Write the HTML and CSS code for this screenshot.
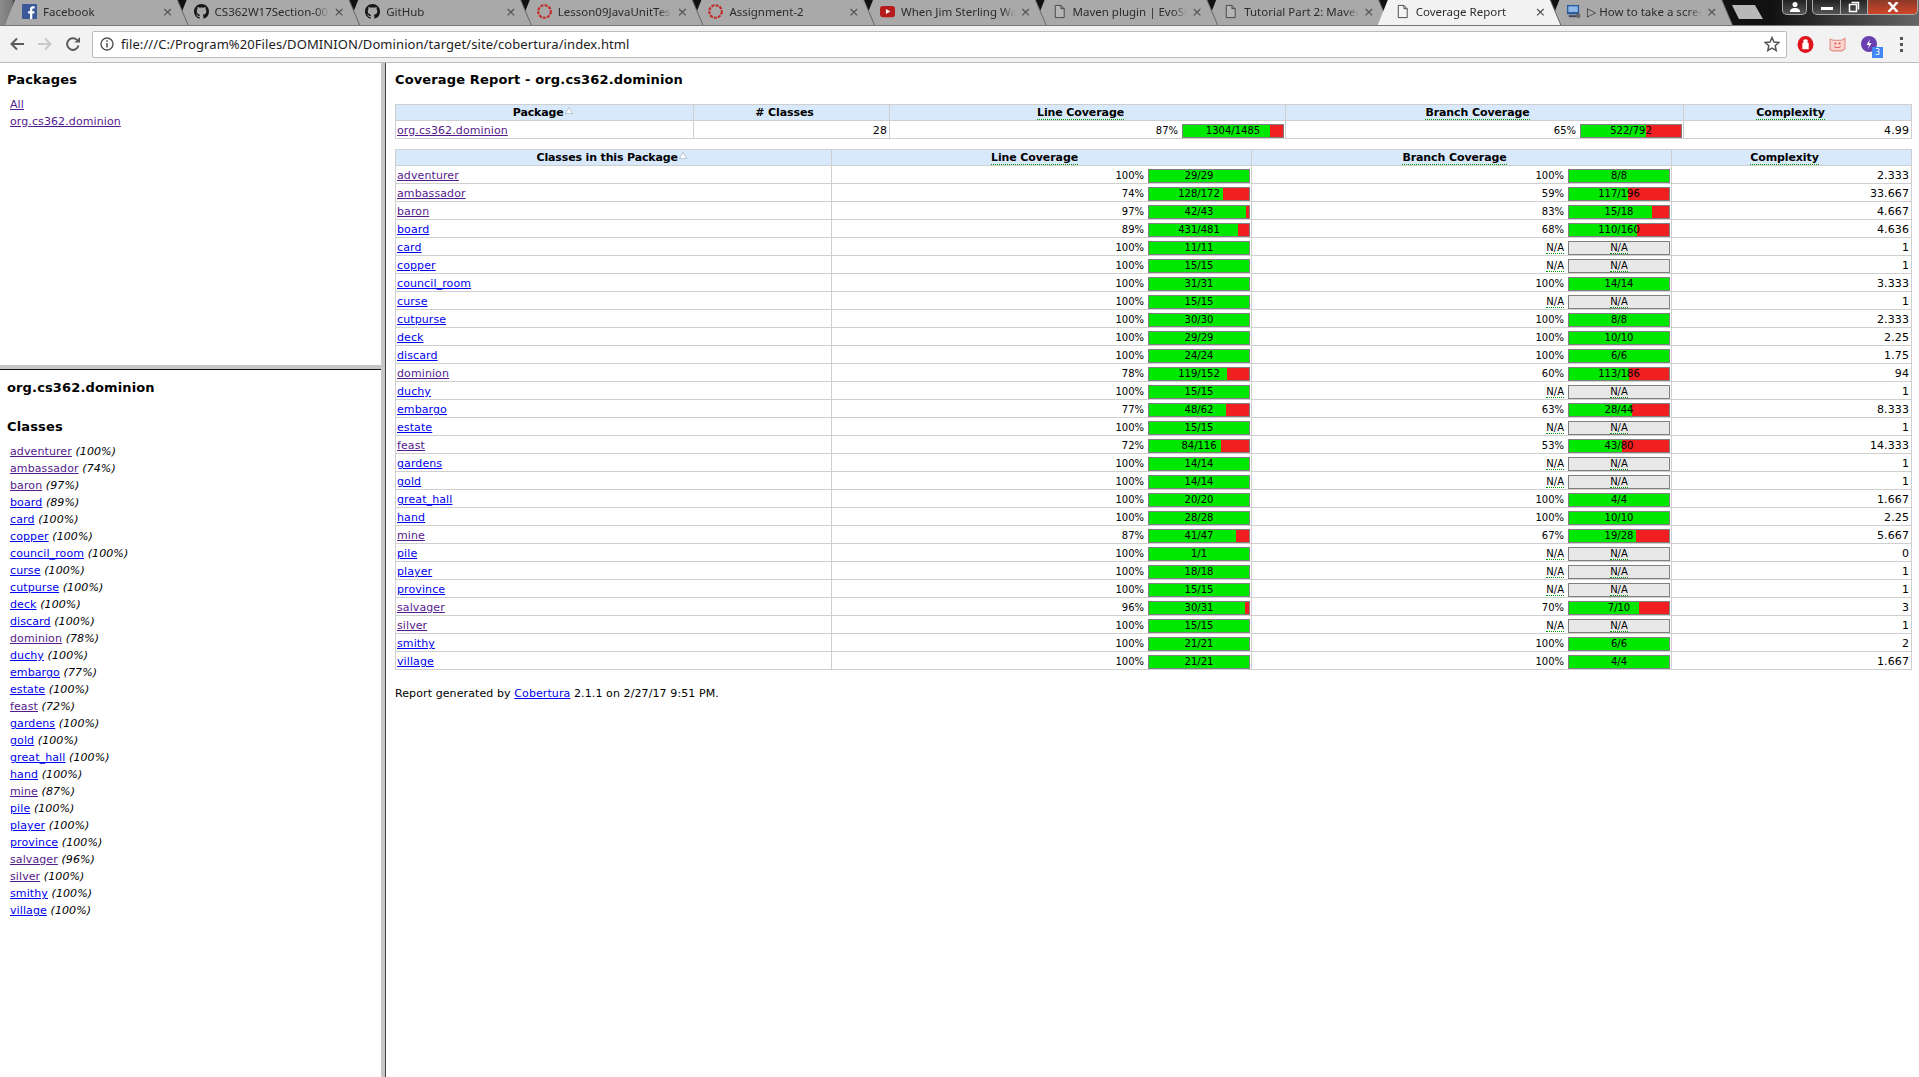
FILE: index.html
```html
<!DOCTYPE html>
<html lang="en">
<head>
    <meta charset="UTF-8">
    <title>Coverage Report</title>
    <link rel="stylesheet" href="styles.css">
</head>
<body>
    <svg class="defs" width="0" height="0">
        <symbol id="page" viewBox="0 0 16 16"><path d="M3.5 1.5h6l3.5 3.5v9.5h-9.5zM9.5 1.5v3.5h3.5" fill="#fff" fill-opacity="0.15" stroke="#444" stroke-width="1"/></symbol>
        <symbol id="github" viewBox="0 0 16 16"><path fill="#181717" d="M8 0C3.58 0 0 3.58 0 8c0 3.54 2.29 6.53 5.47 7.59.4.07.55-.17.55-.38 0-.19-.01-.82-.01-1.49-2.01.37-2.53-.49-2.69-.94-.09-.23-.48-.94-.82-1.13-.28-.15-.68-.52-.01-.53.63-.01 1.08.58 1.23.82.72 1.21 1.87.87 2.33.66.07-.52.28-.87.51-1.07-1.78-.2-3.64-.89-3.64-3.95 0-.87.31-1.59.82-2.15-.08-.2-.36-1.02.08-2.12 0 0 .67-.21 2.2.82.64-.18 1.32-.27 2-.27.68 0 1.36.09 2 .27 1.53-1.04 2.2-.82 2.2-.82.44 1.1.16 1.92.08 2.12.51.56.82 1.27.82 2.15 0 3.07-1.87 3.75-3.65 3.95.29.25.54.73.54 1.48 0 1.07-.01 1.93-.01 2.2 0 .21.15.46.55.38A8.013 8.013 0 0016 8c0-4.42-3.58-8-8-8z"/></symbol>
        <symbol id="ring" viewBox="0 0 16 16"><circle cx="8" cy="8" r="6.7" fill="none" stroke="#c42b27" stroke-width="2.3" stroke-dasharray="3.2 1.2"/></symbol>
        <symbol id="sort" viewBox="0 0 8 7"><path d="M4 .5L7.5 6.5H.5z" fill="#fff" stroke="#9fb2c6" stroke-width="0.7"/></symbol>
    </svg>

    <div class="tabstrip">
        <div class="tab"><div class="tab-shape">
            <svg class="favicon" viewBox="0 0 16 16"><rect width="16" height="16" rx="1" fill="#3b5998"/><path d="M11 16v-6h2l.4-2.4H11V6c0-.8.3-1.2 1.2-1.2h1.3V2.6c-.4 0-1-.1-1.8-.1-1.9 0-3.1 1.100-3.100 3.200v1.900H6.500V10h2.100v6z" fill="#fff"/></svg>
            <span class="tab-title">Facebook</span><span class="tab-close">×</span>
        </div></div>
        <div class="tab"><div class="tab-shape">
            <svg class="favicon"><use href="#github"/></svg>
            <span class="tab-title">CS362W17Section-00</span><span class="tab-close">×</span>
        </div></div>
        <div class="tab"><div class="tab-shape">
            <svg class="favicon"><use href="#github"/></svg>
            <span class="tab-title">GitHub</span><span class="tab-close">×</span>
        </div></div>
        <div class="tab"><div class="tab-shape">
            <svg class="favicon"><use href="#ring"/></svg>
            <span class="tab-title">Lesson09JavaUnitTesting</span><span class="tab-close">×</span>
        </div></div>
        <div class="tab"><div class="tab-shape">
            <svg class="favicon"><use href="#ring"/></svg>
            <span class="tab-title">Assignment-2</span><span class="tab-close">×</span>
        </div></div>
        <div class="tab"><div class="tab-shape">
            <svg class="favicon" viewBox="0 0 16 16"><rect y="2" width="16" height="12" rx="3" fill="#b71c1c"/><path d="M6.300 5.300L11 8l-4.700 2.700z" fill="#fff"/></svg>
            <span class="tab-title">When Jim Sterling Was</span><span class="tab-close">×</span>
        </div></div>
        <div class="tab"><div class="tab-shape">
            <svg class="favicon"><use href="#page"/></svg>
            <span class="tab-title">Maven plugin | EvoSuite</span><span class="tab-close">×</span>
        </div></div>
        <div class="tab"><div class="tab-shape">
            <svg class="favicon"><use href="#page"/></svg>
            <span class="tab-title">Tutorial Part 2: Maven</span><span class="tab-close">×</span>
        </div></div>
        <div class="tab tab-active"><div class="tab-shape">
            <svg class="favicon"><use href="#page"/></svg>
            <span class="tab-title">Coverage Report</span><span class="tab-close">×</span>
        </div></div>
        <div class="tab"><div class="tab-shape">
            <svg class="favicon" viewBox="0 0 16 16"><rect x="1" y="1" width="13" height="10" fill="#2c5c9e"/><rect x="2.500" y="2.500" width="10" height="6" fill="#8fb8e8"/><rect x="3" y="12" width="9" height="2" fill="#445"/><circle cx="13" cy="12.500" r="2.500" fill="#666"/></svg>
            <span class="tab-title">▷ How to take a screenshot</span><span class="tab-close">×</span>
        </div></div>
        <div class="newtab"></div>
        <div class="winbtns">
            <div class="winbtn btn-profile"><svg viewBox="0 0 12 12" width="12" height="12"><circle cx="6" cy="3.500" r="2.500" fill="#fff"/><path d="M1 11c0-3 2-4 5-4s5 1 5 4z" fill="#fff"/></svg></div>
            <div class="winbtn btn-min"><i></i></div>
            <div class="winbtn btn-max"><svg viewBox="0 0 12 12" width="12" height="12"><path d="M3.500 1.500h7v7M1.500 3.500h7v7h-7z" fill="none" stroke="#fff" stroke-width="1.500"/></svg></div>
            <div class="winbtn btn-close"><svg viewBox="0 0 12 10" width="12" height="10"><path d="M1.500 0l9 10M10.500 0l-9 10" stroke="#fff" stroke-width="2.500"/></svg></div>
        </div>
    </div>

    <div class="toolbar">
        <svg class="navicon" viewBox="0 0 16 16"><path d="M15 8H3M8 2.500L2.500 8 8 13.500" fill="none" stroke="#5a5a5a" stroke-width="2"/></svg>
        <svg class="navicon" viewBox="0 0 16 16"><path d="M1 8h12M8 2.500L13.500 8 8 13.500" fill="none" stroke="#c8c8c8" stroke-width="2"/></svg>
        <svg class="navicon" viewBox="0 0 16 16"><path d="M13.500 9.500A5.800 5.800 0 1 1 12 4" fill="none" stroke="#5a5a5a" stroke-width="2"/><path d="M9.500 6.500H15V1z" fill="#5a5a5a"/></svg>
        <div class="omnibox">
            <svg class="info" viewBox="0 0 14 14"><circle cx="7" cy="7" r="6" fill="none" stroke="#555" stroke-width="1.400"/><path d="M7 6v4.500M7 3.200v1.600" stroke="#555" stroke-width="1.600"/></svg>
            <span class="url">file:///C:/Program%20Files/DOMINION/Dominion/target/site/cobertura/index.html</span>
            <svg class="star" viewBox="0 0 16 16"><path d="M8 1.500l2 4.500 4.800.5-3.600 3.200 1 4.800L8 12.100l-4.200 2.400 1-4.800L1.200 6.500 6 6z" fill="none" stroke="#555" stroke-width="1.500"/></svg>
        </div>
        <div class="exts">
            <svg class="ext" viewBox="0 0 16 16"><ellipse cx="8" cy="8" rx="7.500" ry="8" fill="#e0141c"/><path d="M5 12.500V6.500h1V3.500h1.200V3h1.600v.5H10v3h1v6z" fill="#fff"/></svg>
            <svg class="ext" viewBox="0 0 16 16"><path d="M1 3l3 1h8l3-2v10l-3 2H4l-3-1z" fill="#fbd5d0" stroke="#e58a80"/><circle cx="6" cy="7" r="1" fill="#d9534f"/><circle cx="10" cy="7" r="1" fill="#d9534f"/><path d="M5 10q3 2 6 0" fill="none" stroke="#d9534f"/></svg>
            <div class="ext ext-badged">
                <svg viewBox="0 0 16 16"><circle cx="8" cy="8" r="8" fill="#6a3fb0"/><path d="M9 3L5.500 9H8l-1 4 3.500-6H8z" fill="#fff"/></svg>
                <span class="badge">3</span>
            </div>
            <div class="menu-dots"><i></i><i></i><i></i></div>
        </div>
    </div>

    <div class="frames">
        <div class="sidebar">
            <div class="pane-packages">
                <h2>Packages</h2>
                <ul class="navlist">
                    <li><a class="seen" href="#">All</a></li>
                    <li><a class="seen" href="#">org.cs362.dominion</a></li>
                </ul>
            </div>
            <div class="pane-classes">
                <h2>org.cs362.dominion</h2>
                <h2 class="classes-title">Classes</h2>
                <ul class="navlist">
                    <li><a class="seen" href="#">adventurer</a> <em>(100%)</em></li>
                    <li><a class="seen" href="#">ambassador</a> <em>(74%)</em></li>
                    <li><a class="seen" href="#">baron</a> <em>(97%)</em></li>
                    <li><a href="#">board</a> <em>(89%)</em></li>
                    <li><a href="#">card</a> <em>(100%)</em></li>
                    <li><a href="#">copper</a> <em>(100%)</em></li>
                    <li><a href="#">council_room</a> <em>(100%)</em></li>
                    <li><a href="#">curse</a> <em>(100%)</em></li>
                    <li><a href="#">cutpurse</a> <em>(100%)</em></li>
                    <li><a href="#">deck</a> <em>(100%)</em></li>
                    <li><a href="#">discard</a> <em>(100%)</em></li>
                    <li><a class="seen" href="#">dominion</a> <em>(78%)</em></li>
                    <li><a href="#">duchy</a> <em>(100%)</em></li>
                    <li><a href="#">embargo</a> <em>(77%)</em></li>
                    <li><a href="#">estate</a> <em>(100%)</em></li>
                    <li><a class="seen" href="#">feast</a> <em>(72%)</em></li>
                    <li><a href="#">gardens</a> <em>(100%)</em></li>
                    <li><a href="#">gold</a> <em>(100%)</em></li>
                    <li><a href="#">great_hall</a> <em>(100%)</em></li>
                    <li><a href="#">hand</a> <em>(100%)</em></li>
                    <li><a class="seen" href="#">mine</a> <em>(87%)</em></li>
                    <li><a href="#">pile</a> <em>(100%)</em></li>
                    <li><a href="#">player</a> <em>(100%)</em></li>
                    <li><a href="#">province</a> <em>(100%)</em></li>
                    <li><a class="seen" href="#">salvager</a> <em>(96%)</em></li>
                    <li><a class="seen" href="#">silver</a> <em>(100%)</em></li>
                    <li><a href="#">smithy</a> <em>(100%)</em></li>
                    <li><a href="#">village</a> <em>(100%)</em></li>
                </ul>
            </div>
        </div>

        <div class="report">
            <h1>Coverage Report - org.cs362.dominion</h1>

            <table class="report-table summary">
                <colgroup><col class="c-pkg"><col class="c-num"><col class="c-line"><col class="c-branch"><col></colgroup>
                <thead>
                    <tr>
                        <th class="sorted">Package <svg class="sort"><use href="#sort"/></svg></th>
                        <th># Classes</th>
                        <th><span class="abbr">Line Coverage</span></th>
                        <th><span class="abbr">Branch Coverage</span></th>
                        <th><span class="abbr">Complexity</span></th>
                    </tr>
                </thead>
                <tbody>
                    <tr>
                        <td><a class="seen" href="#">org.cs362.dominion</a></td>
                        <td class="num">28</td>
                        <td><div class="cov"><span>87%</span><div class="bar"><i style="width:87%"></i><b>1304/1485</b></div></div></td>
                        <td><div class="cov"><span>65%</span><div class="bar"><i style="width:65%"></i><b>522/792</b></div></div></td>
                        <td class="num">4.99</td>
                    </tr>
                </tbody>
            </table>

            <table class="report-table classes">
                <colgroup><col class="c-name"><col class="c-cov"><col class="c-cov"><col></colgroup>
                <thead>
                    <tr>
                        <th class="sorted">Classes in this Package <svg class="sort"><use href="#sort"/></svg></th>
                        <th><span class="abbr">Line Coverage</span></th>
                        <th><span class="abbr">Branch Coverage</span></th>
                        <th><span class="abbr">Complexity</span></th>
                    </tr>
                </thead>
                <tbody>
                    <tr><td><a class="seen" href="#">adventurer</a></td><td><div class="cov"><span>100%</span><div class="bar"><i style="width:100%"></i><b>29/29</b></div></div></td><td><div class="cov"><span>100%</span><div class="bar"><i style="width:100%"></i><b>8/8</b></div></div></td><td class="num">2.333</td></tr>
                    <tr><td><a class="seen" href="#">ambassador</a></td><td><div class="cov"><span>74%</span><div class="bar"><i style="width:74%"></i><b>128/172</b></div></div></td><td><div class="cov"><span>59%</span><div class="bar"><i style="width:59%"></i><b>117/196</b></div></div></td><td class="num">33.667</td></tr>
                    <tr><td><a class="seen" href="#">baron</a></td><td><div class="cov"><span>97%</span><div class="bar"><i style="width:97%"></i><b>42/43</b></div></div></td><td><div class="cov"><span>83%</span><div class="bar"><i style="width:83%"></i><b>15/18</b></div></div></td><td class="num">4.667</td></tr>
                    <tr><td><a href="#">board</a></td><td><div class="cov"><span>89%</span><div class="bar"><i style="width:89%"></i><b>431/481</b></div></div></td><td><div class="cov"><span>68%</span><div class="bar"><i style="width:68%"></i><b>110/160</b></div></div></td><td class="num">4.636</td></tr>
                    <tr><td><a href="#">card</a></td><td><div class="cov"><span>100%</span><div class="bar"><i style="width:100%"></i><b>11/11</b></div></div></td><td><div class="cov"><span class="abbr">N/A</span><div class="bar bar-na"><b><span class="abbr">N/A</span></b></div></div></td><td class="num">1</td></tr>
                    <tr><td><a href="#">copper</a></td><td><div class="cov"><span>100%</span><div class="bar"><i style="width:100%"></i><b>15/15</b></div></div></td><td><div class="cov"><span class="abbr">N/A</span><div class="bar bar-na"><b><span class="abbr">N/A</span></b></div></div></td><td class="num">1</td></tr>
                    <tr><td><a href="#">council_room</a></td><td><div class="cov"><span>100%</span><div class="bar"><i style="width:100%"></i><b>31/31</b></div></div></td><td><div class="cov"><span>100%</span><div class="bar"><i style="width:100%"></i><b>14/14</b></div></div></td><td class="num">3.333</td></tr>
                    <tr><td><a href="#">curse</a></td><td><div class="cov"><span>100%</span><div class="bar"><i style="width:100%"></i><b>15/15</b></div></div></td><td><div class="cov"><span class="abbr">N/A</span><div class="bar bar-na"><b><span class="abbr">N/A</span></b></div></div></td><td class="num">1</td></tr>
                    <tr><td><a href="#">cutpurse</a></td><td><div class="cov"><span>100%</span><div class="bar"><i style="width:100%"></i><b>30/30</b></div></div></td><td><div class="cov"><span>100%</span><div class="bar"><i style="width:100%"></i><b>8/8</b></div></div></td><td class="num">2.333</td></tr>
                    <tr><td><a href="#">deck</a></td><td><div class="cov"><span>100%</span><div class="bar"><i style="width:100%"></i><b>29/29</b></div></div></td><td><div class="cov"><span>100%</span><div class="bar"><i style="width:100%"></i><b>10/10</b></div></div></td><td class="num">2.25</td></tr>
                    <tr><td><a href="#">discard</a></td><td><div class="cov"><span>100%</span><div class="bar"><i style="width:100%"></i><b>24/24</b></div></div></td><td><div class="cov"><span>100%</span><div class="bar"><i style="width:100%"></i><b>6/6</b></div></div></td><td class="num">1.75</td></tr>
                    <tr><td><a class="seen" href="#">dominion</a></td><td><div class="cov"><span>78%</span><div class="bar"><i style="width:78%"></i><b>119/152</b></div></div></td><td><div class="cov"><span>60%</span><div class="bar"><i style="width:60%"></i><b>113/186</b></div></div></td><td class="num">94</td></tr>
                    <tr><td><a href="#">duchy</a></td><td><div class="cov"><span>100%</span><div class="bar"><i style="width:100%"></i><b>15/15</b></div></div></td><td><div class="cov"><span class="abbr">N/A</span><div class="bar bar-na"><b><span class="abbr">N/A</span></b></div></div></td><td class="num">1</td></tr>
                    <tr><td><a href="#">embargo</a></td><td><div class="cov"><span>77%</span><div class="bar"><i style="width:77%"></i><b>48/62</b></div></div></td><td><div class="cov"><span>63%</span><div class="bar"><i style="width:63%"></i><b>28/44</b></div></div></td><td class="num">8.333</td></tr>
                    <tr><td><a href="#">estate</a></td><td><div class="cov"><span>100%</span><div class="bar"><i style="width:100%"></i><b>15/15</b></div></div></td><td><div class="cov"><span class="abbr">N/A</span><div class="bar bar-na"><b><span class="abbr">N/A</span></b></div></div></td><td class="num">1</td></tr>
                    <tr><td><a class="seen" href="#">feast</a></td><td><div class="cov"><span>72%</span><div class="bar"><i style="width:72%"></i><b>84/116</b></div></div></td><td><div class="cov"><span>53%</span><div class="bar"><i style="width:53%"></i><b>43/80</b></div></div></td><td class="num">14.333</td></tr>
                    <tr><td><a href="#">gardens</a></td><td><div class="cov"><span>100%</span><div class="bar"><i style="width:100%"></i><b>14/14</b></div></div></td><td><div class="cov"><span class="abbr">N/A</span><div class="bar bar-na"><b><span class="abbr">N/A</span></b></div></div></td><td class="num">1</td></tr>
                    <tr><td><a href="#">gold</a></td><td><div class="cov"><span>100%</span><div class="bar"><i style="width:100%"></i><b>14/14</b></div></div></td><td><div class="cov"><span class="abbr">N/A</span><div class="bar bar-na"><b><span class="abbr">N/A</span></b></div></div></td><td class="num">1</td></tr>
                    <tr><td><a href="#">great_hall</a></td><td><div class="cov"><span>100%</span><div class="bar"><i style="width:100%"></i><b>20/20</b></div></div></td><td><div class="cov"><span>100%</span><div class="bar"><i style="width:100%"></i><b>4/4</b></div></div></td><td class="num">1.667</td></tr>
                    <tr><td><a href="#">hand</a></td><td><div class="cov"><span>100%</span><div class="bar"><i style="width:100%"></i><b>28/28</b></div></div></td><td><div class="cov"><span>100%</span><div class="bar"><i style="width:100%"></i><b>10/10</b></div></div></td><td class="num">2.25</td></tr>
                    <tr><td><a class="seen" href="#">mine</a></td><td><div class="cov"><span>87%</span><div class="bar"><i style="width:87%"></i><b>41/47</b></div></div></td><td><div class="cov"><span>67%</span><div class="bar"><i style="width:67%"></i><b>19/28</b></div></div></td><td class="num">5.667</td></tr>
                    <tr><td><a href="#">pile</a></td><td><div class="cov"><span>100%</span><div class="bar"><i style="width:100%"></i><b>1/1</b></div></div></td><td><div class="cov"><span class="abbr">N/A</span><div class="bar bar-na"><b><span class="abbr">N/A</span></b></div></div></td><td class="num">0</td></tr>
                    <tr><td><a href="#">player</a></td><td><div class="cov"><span>100%</span><div class="bar"><i style="width:100%"></i><b>18/18</b></div></div></td><td><div class="cov"><span class="abbr">N/A</span><div class="bar bar-na"><b><span class="abbr">N/A</span></b></div></div></td><td class="num">1</td></tr>
                    <tr><td><a href="#">province</a></td><td><div class="cov"><span>100%</span><div class="bar"><i style="width:100%"></i><b>15/15</b></div></div></td><td><div class="cov"><span class="abbr">N/A</span><div class="bar bar-na"><b><span class="abbr">N/A</span></b></div></div></td><td class="num">1</td></tr>
                    <tr><td><a class="seen" href="#">salvager</a></td><td><div class="cov"><span>96%</span><div class="bar"><i style="width:96%"></i><b>30/31</b></div></div></td><td><div class="cov"><span>70%</span><div class="bar"><i style="width:70%"></i><b>7/10</b></div></div></td><td class="num">3</td></tr>
                    <tr><td><a class="seen" href="#">silver</a></td><td><div class="cov"><span>100%</span><div class="bar"><i style="width:100%"></i><b>15/15</b></div></div></td><td><div class="cov"><span class="abbr">N/A</span><div class="bar bar-na"><b><span class="abbr">N/A</span></b></div></div></td><td class="num">1</td></tr>
                    <tr><td><a href="#">smithy</a></td><td><div class="cov"><span>100%</span><div class="bar"><i style="width:100%"></i><b>21/21</b></div></div></td><td><div class="cov"><span>100%</span><div class="bar"><i style="width:100%"></i><b>6/6</b></div></div></td><td class="num">2</td></tr>
                    <tr><td><a href="#">village</a></td><td><div class="cov"><span>100%</span><div class="bar"><i style="width:100%"></i><b>21/21</b></div></div></td><td><div class="cov"><span>100%</span><div class="bar"><i style="width:100%"></i><b>4/4</b></div></div></td><td class="num">1.667</td></tr>
                </tbody>
            </table>

            <p class="generated">Report generated by <a href="#">Cobertura</a> 2.1.1 on 2/27/17 9:51 PM.</p>
        </div>
    </div>
</body>
</html>
```

FILE: styles.css
```css
* {
    box-sizing: border-box;
}
html, body {
    margin: 0;
    height: 100%;
    overflow: hidden;
}
body {
    display: flex;
    flex-direction: column;
    background: white;
    color: #000;
    font-family: "DejaVu Sans", Verdana, sans-serif;
    font-size: 11px;
    letter-spacing: 0.1px;
}
.defs {
    position: absolute;
}
a {
    color: #0000ee;
}
a.seen {
    color: #551a8b;
}

/* tab strip */
.tabstrip {
    display: flex;
    flex: none;
    height: 26px;
    padding-left: 5px;
    border-bottom: 1px solid #777;
    background: linear-gradient(to right, #8c8c8c 0, #777 12px, #111 16px, #111 1770px, #333 1830px, #666 100%);
    font-family: "Noto Sans", sans-serif;
    font-size: 11.5px;
    letter-spacing: 0;
}
.tab {
    position: relative;
    flex: none;
    width: 182.6px;
    height: 25px;
    margin-right: -11px;
    filter: drop-shadow(1px 0 0 #666);
}
.tab:nth-child(1) { z-index: 10; }
.tab:nth-child(2) { z-index: 9; }
.tab:nth-child(3) { z-index: 8; }
.tab:nth-child(4) { z-index: 7; }
.tab:nth-child(5) { z-index: 6; }
.tab:nth-child(6) { z-index: 5; }
.tab:nth-child(7) { z-index: 4; }
.tab:nth-child(8) { z-index: 3; }
.tab:nth-child(9) { z-index: 11; }
.tab:nth-child(10) { z-index: 1; margin-right: -7px; }
.tab-shape {
    display: flex;
    align-items: center;
    height: 100%;
    padding: 0 12px 2px 17px;
    background: #a9a9a9;
    color: #2b2b2b;
    clip-path: polygon(10px 0, 172px 0, 100% 100%, 0 100%);
}
.tab-active .tab-shape {
    background: #f2f2f2;
}
.favicon {
    flex: none;
    width: 15px;
    height: 15px;
    margin-right: 6px;
}
.tab-title {
    flex: 1;
    overflow: hidden;
    white-space: nowrap;
    -webkit-mask-image: linear-gradient(to right, #000 88%, transparent 100%);
    mask-image: linear-gradient(to right, #000 88%, transparent 100%);
}
.tab-close {
    flex: none;
    width: 16px;
    margin-left: 2px;
    color: #555;
    font-size: 17px;
    line-height: 16px;
    text-align: center;
}
.newtab {
    flex: none;
    align-self: flex-start;
    width: 31px;
    height: 14px;
    margin: 5px 0 0 7px;
    background: #b8b8b8;
    clip-path: polygon(0 0, 23px 0, 100% 100%, 7px 100%);
}
.winbtns {
    display: flex;
    flex: none;
    margin-left: auto;
    height: 15px;
}
.winbtn {
    display: flex;
    align-items: center;
    justify-content: center;
    height: 15px;
    border: 1px solid #aaa;
    border-top: none;
    background: linear-gradient(#222, #555);
}
.btn-profile {
    width: 25px;
    margin-right: 5px;
    border-radius: 0 0 5px 5px;
}
.btn-min {
    width: 29px;
    border-radius: 0 0 0 5px;
}
.btn-min i {
    width: 12px;
    height: 3px;
    margin-top: 3px;
    background: #fff;
}
.btn-max {
    width: 27px;
    border-left: none;
}
.btn-close {
    width: 50px;
    margin-right: 1px;
    border-left: none;
    border-radius: 0 0 5px 0;
    background: linear-gradient(#8a3a28, #d0462a);
}

/* toolbar */
.toolbar {
    display: flex;
    flex: none;
    align-items: center;
    height: 37px;
    padding: 0 0 0 9px;
    border-bottom: 1px solid #bcbcbc;
    background: #f2f2f2;
}
.navicon {
    flex: none;
    width: 16px;
    height: 16px;
    margin-right: 12px;
}
.omnibox {
    display: flex;
    flex: none;
    align-items: center;
    width: 1695px;
    height: 27px;
    margin-left: -1px;
    padding: 0 6px 0 7px;
    border: 1px solid #bbb;
    border-radius: 2px;
    background: white;
    font-family: "Noto Sans", sans-serif;
    font-size: 13px;
    letter-spacing: 0.08px;
}
.info {
    flex: none;
    width: 14px;
    height: 14px;
    margin-right: 7px;
}
.url {
    flex: 1;
    color: #222;
    white-space: nowrap;
}
.star {
    flex: none;
    width: 16px;
    height: 16px;
}
.exts {
    display: flex;
    align-items: center;
    margin-left: 10px;
}
.ext {
    position: relative;
    flex: none;
    width: 17px;
    height: 17px;
    margin-right: 15px;
}
.ext-badged {
    width: 16px;
    height: 16px;
    margin-right: 23px;
}
.ext-badged svg {
    display: block;
}
.badge {
    position: absolute;
    left: 11px;
    top: 11px;
    width: 11px;
    height: 11px;
    background: #4285f4;
    color: white;
    font-size: 8px;
    letter-spacing: 0;
    line-height: 11px;
    text-align: center;
}
.menu-dots {
    display: flex;
    flex-direction: column;
    gap: 3px;
}
.menu-dots i {
    width: 3px;
    height: 3px;
    background: #555;
}

/* frames */
.frames {
    display: flex;
    flex: 1;
    min-height: 0;
}
.sidebar {
    display: flex;
    flex: none;
    flex-direction: column;
    width: 385px;
    border-right: 4px solid #c6c6c6;
}
.pane-packages {
    flex: none;
    height: 306px;
    padding-top: 8px;
    border-bottom: 4px solid #c6c6c6;
}
.pane-classes {
    flex: 1;
    padding-top: 9px;
    border-top: 1px solid #111;
}
h1, h2 {
    margin: 0 0 0 7px;
    font-size: 13px;
    font-weight: bold;
    letter-spacing: 0.14px;
    line-height: 17px;
}
.pane-classes h2 {
    margin-bottom: 22px;
}
.pane-classes .classes-title {
    margin-bottom: 8px;
}
.navlist {
    margin: 8px 0 0 10px;
    padding: 0;
    list-style: none;
    line-height: 17px;
}
.pane-classes .navlist {
    margin-top: 0;
}

/* report */
.report {
    flex: 1;
    min-width: 0;
    padding: 8px 7px 0 9px;
    border-left: 1px solid #444;
}
.report h1 {
    margin: 0 0 16px;
}
.report-table {
    width: 1517px;
    margin-bottom: 10px;
    border-collapse: collapse;
    table-layout: fixed;
}
.c-pkg { width: 298px; }
.c-num { width: 196px; }
.c-line { width: 396px; }
.c-branch { width: 398px; }
.c-name { width: 436px; }
.c-cov { width: 420px; }
th, td {
    border: 1px solid #cfcfcf;
    overflow: hidden;
    white-space: nowrap;
}
th {
    height: 16px;
    padding: 1px 15px 0 1px;
    background: #d9e9fc;
    font-weight: bold;
    letter-spacing: -0.1px;
    line-height: 14px;
    text-align: center;
}
th.sorted {
    padding-right: 4px;
    letter-spacing: -0.15px;
}
td {
    height: 18px;
    padding: 2px 1px 0;
}
.num {
    padding-right: 2px;
    font-size: 11px;
    text-align: right;
}
.abbr {
    border-bottom: 1px dotted #009900;
}
.sort {
    width: 8px;
    height: 7px;
    margin-left: -2px;
    vertical-align: 2px;
}
.cov {
    display: flex;
    align-items: center;
    justify-content: flex-end;
    gap: 4px;
    font-size: 10px;
    letter-spacing: 0;
}
.bar {
    position: relative;
    flex: none;
    width: 102px;
    height: 14px;
    border: 1px solid #808080;
    background: #f02020;
}
.bar i {
    display: block;
    height: 100%;
    background: #00e800;
}
.bar b {
    position: absolute;
    top: 0;
    left: 0;
    width: 100%;
    font-weight: normal;
    line-height: 12px;
    text-align: center;
}
.bar-na {
    background: #e8e8e8;
}
.generated {
    margin: 15px 0 0;
    line-height: 17px;
}
```
